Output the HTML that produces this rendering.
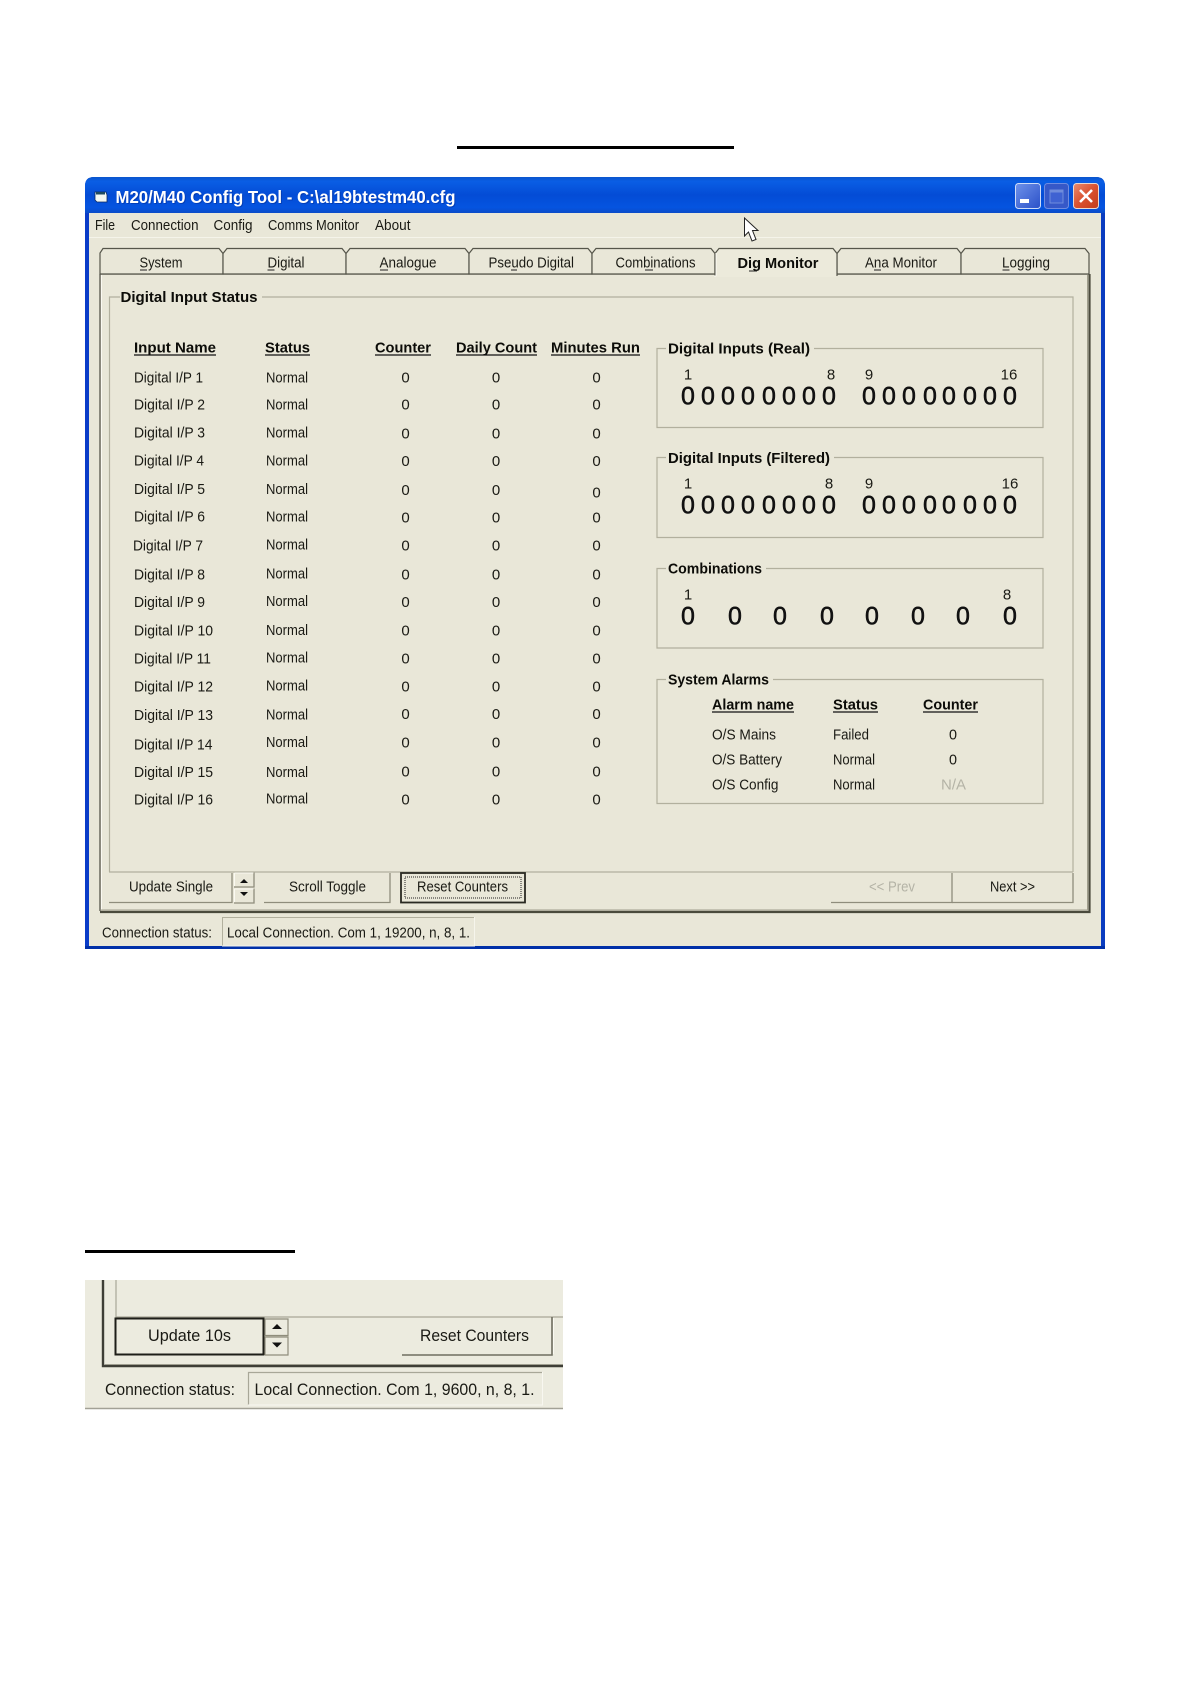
<!DOCTYPE html>
<html><head><meta charset="utf-8"><title>M20/M40 Config Tool</title>
<style>
html,body{margin:0;padding:0;background:#fff;width:1191px;height:1684px;overflow:hidden}
svg{display:block;filter:blur(.35px)}
text{font-family:"Liberation Sans",sans-serif;font-size:15px;fill:#1a1a14;transform:translateY(-.8px)}
.b{font-weight:bold;fill:#0c0c08}
.z{font-size:25px;fill:#111;stroke:#111;stroke-width:.55px;transform:translateY(0)}
.w{fill:#fff;font-weight:bold;font-size:17.500px;transform:none}
.n{transform:none}
.g{fill:#b4b3a6}
.l{font-size:17px}
</style></head><body>
<svg width="1191" height="1684" viewBox="0 0 1191 1684" xmlns="http://www.w3.org/2000/svg">
<defs>
<linearGradient id="tb" x1="0" y1="0" x2="0" y2="1"><stop offset="0" stop-color="#0a55cc"/><stop offset=".12" stop-color="#0a5ee4"/><stop offset=".5" stop-color="#044cd6"/><stop offset=".85" stop-color="#0554e0"/><stop offset="1" stop-color="#0a4cc8"/></linearGradient>
<linearGradient id="bm" x1="0" y1="0" x2="1" y2="1"><stop offset="0" stop-color="#6f92ea"/><stop offset="1" stop-color="#2a50c8"/></linearGradient>
<linearGradient id="bx" x1="0" y1="0" x2="1" y2="1"><stop offset="0" stop-color="#e88c70"/><stop offset=".5" stop-color="#d9512f"/><stop offset="1" stop-color="#c23c1c"/></linearGradient>
</defs>
<rect width="1191" height="1684" fill="#fff"/>
<rect x="457" y="146" width="277" height="3" fill="#000"/>
<rect x="85" y="1250" width="210" height="3" fill="#000"/>

<!-- window -->
<path d="M85 949V186q0-9 9-9H1096q9 0 9 9V949Z" fill="#0a3cc8"/>
<path d="M85 186q0-9 9-9H1096q9 0 9 9V213H85Z" fill="url(#tb)"/>
<rect x="89" y="213" width="1012" height="733" fill="#e9e7d8"/>
<rect x="85" y="946" width="1020" height="3" fill="#0030a8"/>
<rect x="1101" y="213" width="4" height="733" fill="#0a3cc0"/>
<rect x="89" y="237" width="1012" height="1" fill="#f5f4ea"/>

<!-- title icon -->
<path d="M95 192h11l1 3v7H97l-2-2Z" fill="#f4f8f2" stroke="#0c2a60" stroke-width=".8"/>
<rect x="96" y="192" width="9" height="2.500" fill="#1e4a60"/>
<text class="w" x="116.500" y="204" textLength="340" lengthAdjust="spacingAndGlyphs" style="fill:#001a70;fill-opacity:.35">M20/M40 Config Tool - C:\al19btestm40.cfg</text>
<text class="w" x="115.500" y="203" textLength="340" lengthAdjust="spacingAndGlyphs">M20/M40 Config Tool - C:\al19btestm40.cfg</text>

<!-- caption buttons -->
<rect x="1015.500" y="183.500" width="25" height="25" rx="3" fill="url(#bm)" stroke="#cfdcf8"/>
<rect x="1020" y="199" width="9" height="4" fill="#fff"/>
<rect x="1044.500" y="183.500" width="24" height="25" rx="3" fill="#3658c8" stroke="#6f8be0"/>
<rect x="1050" y="190" width="13" height="13" fill="#3f62d2" stroke="#6f8cdc"/>
<rect x="1050" y="190" width="13" height="2.500" fill="#6f8cdc"/>
<rect x="1073.500" y="183.500" width="25" height="25" rx="3" fill="url(#bx)" stroke="#e8d8d0"/>
<path d="M1080 190l12 12M1092 190l-12 12" stroke="#fff" stroke-width="2.600" fill="none"/>

<!-- menu -->
<text class="n" x="95" y="230" textLength="20" lengthAdjust="spacingAndGlyphs">File</text>
<text class="n" x="131" y="230" textLength="67.500" lengthAdjust="spacingAndGlyphs">Connection</text>
<text class="n" x="213.500" y="230" textLength="39" lengthAdjust="spacingAndGlyphs">Config</text>
<text class="n" x="268" y="230" textLength="91" lengthAdjust="spacingAndGlyphs">Comms Monitor</text>
<text class="n" x="375" y="230" textLength="35.500" lengthAdjust="spacingAndGlyphs">About</text>

<!-- cursor -->
<path d="M744.500 218v18l4-4 3.500 9 4-1.500-3.500-9h5.500Z" fill="#fff" stroke="#222" stroke-width="1"/>

<!-- panel -->
<rect x="100" y="274" width="989" height="638" fill="#e9e7d8"/>
<path d="M100 274H1089" stroke="#4a4a40" stroke-width="1.200"/>
<path d="M100 274V911" stroke="#4a4a40" stroke-width="1.200"/>
<path d="M101.500 275V910" stroke="#fbfaf2" stroke-width="1"/>
<path d="M1087.500 275V910H101" stroke="#a09e8c" stroke-width="1" fill="none"/>
<path d="M1089.500 274V912H100" stroke="#4a4a3c" stroke-width="2.200" fill="none"/>

<!-- tabs -->
<g fill="#e9e7d8" stroke="#55554a" stroke-width="1.200">
<path d="M100 274V253l3-4.500H219l4 5v20.500Z"/>
<path d="M223 274V253.500l4-5H342l4 5v20.500Z"/>
<path d="M346 274V253.500l4-5H465l4 5v20.500Z"/>
<path d="M469 274V253.500l4-5H588l4 5v20.500Z"/>
<path d="M592 274V253.500l4-5H711l4 5v20.500Z"/>
<path d="M837 274V253.500l4-5H957l4 5v20.500Z"/>
<path d="M961 274V253.500l4-5H1085l4 5v20.500Z"/>
<path d="M715 276V253.500l4-5H833l4 5v22.500" fill="#eceadb"/>
</g>
<rect x="716" y="271" width="120" height="6" fill="#eceadb"/>
<path d="M716 276V253M716 276h-2" stroke="#fdfcf4" stroke-width="1"/>
<text x="139.500" y="268.500" textLength="43" lengthAdjust="spacingAndGlyphs">System</text>
<path d="M140 270h7" stroke="#222"/>
<text x="267.500" y="268.500" textLength="37" lengthAdjust="spacingAndGlyphs">Digital</text>
<path d="M267.500 270h7" stroke="#222"/>
<text x="379.500" y="268.500" textLength="57" lengthAdjust="spacingAndGlyphs">Analogue</text>
<path d="M380 270h8" stroke="#222"/>
<text x="488.500" y="268.500" textLength="85.500" lengthAdjust="spacingAndGlyphs">Pseudo Digital</text>
<path d="M511 270h6" stroke="#222"/>
<text x="615.500" y="268.500" textLength="80" lengthAdjust="spacingAndGlyphs">Combinations</text>
<path d="M645 270h8" stroke="#222"/>
<text class="b" x="737.500" y="269" textLength="81" lengthAdjust="spacingAndGlyphs">Dig Monitor</text>
<path d="M749 271h8" stroke="#222"/>
<text x="865" y="268.500" textLength="72" lengthAdjust="spacingAndGlyphs">Ana Monitor</text>
<path d="M874 270h7" stroke="#222"/>
<text x="1002" y="268.500" textLength="48" lengthAdjust="spacingAndGlyphs">Logging</text>
<path d="M1002.500 270h7" stroke="#222"/>

<!-- main group -->
<path d="M120 297H109.500V872M262 297H1073V872" fill="none" stroke="#b2b09e" stroke-width="1.200"/>
<path d="M109 872H1073" stroke="#b2b09e" stroke-width="1.200"/>
<text class="b" x="120.500" y="303" textLength="137" lengthAdjust="spacingAndGlyphs">Digital Input Status</text>

<!-- headers -->
<text class="b" x="134" y="353.500" textLength="82" lengthAdjust="spacingAndGlyphs">Input Name</text>
<text class="b" x="265" y="353.500" textLength="45" lengthAdjust="spacingAndGlyphs">Status</text>
<text class="b" x="375" y="353.500" textLength="56" lengthAdjust="spacingAndGlyphs">Counter</text>
<text class="b" x="456" y="353.500" textLength="81" lengthAdjust="spacingAndGlyphs">Daily Count</text>
<text class="b" x="551" y="353.500" textLength="89" lengthAdjust="spacingAndGlyphs">Minutes Run</text>
<g stroke="#111" stroke-width="1.200"><path d="M134 355h82M265 355h45M375 355h56M456 355h81M551 355h89"/></g>

<!-- rows names -->
<g>
<text x="134" y="383.500" textLength="69" lengthAdjust="spacingAndGlyphs">Digital I/P 1</text>
<text x="134" y="410.500" textLength="71" lengthAdjust="spacingAndGlyphs">Digital I/P 2</text>
<text x="134" y="438.500" textLength="71" lengthAdjust="spacingAndGlyphs">Digital I/P 3</text>
<text x="134" y="466.500" textLength="70" lengthAdjust="spacingAndGlyphs">Digital I/P 4</text>
<text x="134" y="495" textLength="71" lengthAdjust="spacingAndGlyphs">Digital I/P 5</text>
<text x="134" y="522.500" textLength="71" lengthAdjust="spacingAndGlyphs">Digital I/P 6</text>
<text x="133" y="551.500" textLength="70" lengthAdjust="spacingAndGlyphs">Digital I/P 7</text>
<text x="134" y="580.500" textLength="71" lengthAdjust="spacingAndGlyphs">Digital I/P 8</text>
<text x="134" y="608" textLength="71" lengthAdjust="spacingAndGlyphs">Digital I/P 9</text>
<text x="134" y="636.500" textLength="79" lengthAdjust="spacingAndGlyphs">Digital I/P 10</text>
<text x="134" y="664.500" textLength="77" lengthAdjust="spacingAndGlyphs">Digital I/P 11</text>
<text x="134" y="692.500" textLength="79" lengthAdjust="spacingAndGlyphs">Digital I/P 12</text>
<text x="134" y="721" textLength="79" lengthAdjust="spacingAndGlyphs">Digital I/P 13</text>
<text x="134" y="750.500" textLength="78.500" lengthAdjust="spacingAndGlyphs">Digital I/P 14</text>
<text x="134" y="778" textLength="79" lengthAdjust="spacingAndGlyphs">Digital I/P 15</text>
<text x="134" y="805.500" textLength="79" lengthAdjust="spacingAndGlyphs">Digital I/P 16</text>
</g>
<!-- status -->
<text x="266" y="383.500" textLength="42" lengthAdjust="spacingAndGlyphs">Normal</text>
<text x="266" y="410.500" textLength="42" lengthAdjust="spacingAndGlyphs">Normal</text>
<text x="266" y="438.500" textLength="42" lengthAdjust="spacingAndGlyphs">Normal</text>
<text x="266" y="466.500" textLength="42" lengthAdjust="spacingAndGlyphs">Normal</text>
<text x="266" y="495" textLength="42" lengthAdjust="spacingAndGlyphs">Normal</text>
<text x="266" y="522.500" textLength="42" lengthAdjust="spacingAndGlyphs">Normal</text>
<text x="266" y="550.500" textLength="42" lengthAdjust="spacingAndGlyphs">Normal</text>
<text x="266" y="579.500" textLength="42" lengthAdjust="spacingAndGlyphs">Normal</text>
<text x="266" y="607" textLength="42" lengthAdjust="spacingAndGlyphs">Normal</text>
<text x="266" y="636" textLength="42" lengthAdjust="spacingAndGlyphs">Normal</text>
<text x="266" y="663.500" textLength="42" lengthAdjust="spacingAndGlyphs">Normal</text>
<text x="266" y="691.500" textLength="42" lengthAdjust="spacingAndGlyphs">Normal</text>
<text x="266" y="720.500" textLength="42" lengthAdjust="spacingAndGlyphs">Normal</text>
<text x="266" y="748" textLength="42" lengthAdjust="spacingAndGlyphs">Normal</text>
<text x="266" y="778" textLength="42" lengthAdjust="spacingAndGlyphs">Normal</text>
<text x="266" y="804.500" textLength="42" lengthAdjust="spacingAndGlyphs">Normal</text>
<!-- counters -->
<g text-anchor="middle">
<text x="405.500" y="383.500">0</text><text x="405.500" y="410.500">0</text><text x="405.500" y="439.500">0</text><text x="405.500" y="467">0</text><text x="405.500" y="496">0</text><text x="405.500" y="523.500">0</text><text x="405.500" y="551.500">0</text><text x="405.500" y="580.500">0</text><text x="405.500" y="608">0</text><text x="405.500" y="636.500">0</text><text x="405.500" y="664.500">0</text><text x="405.500" y="692.500">0</text><text x="405.500" y="720">0</text><text x="405.500" y="748.500">0</text><text x="405.500" y="777.500">0</text><text x="405.500" y="805.500">0</text>
<text x="496" y="383.500">0</text><text x="496" y="410.500">0</text><text x="496" y="439.500">0</text><text x="496" y="467">0</text><text x="496" y="496">0</text><text x="496" y="523.500">0</text><text x="496" y="551.500">0</text><text x="496" y="580.500">0</text><text x="496" y="608">0</text><text x="496" y="636.500">0</text><text x="496" y="664.500">0</text><text x="496" y="692.500">0</text><text x="496" y="720">0</text><text x="496" y="748.500">0</text><text x="496" y="777.500">0</text><text x="496" y="805.500">0</text>
<text x="596.500" y="383.500">0</text><text x="596.500" y="410.500">0</text><text x="596.500" y="439.500">0</text><text x="596.500" y="467">0</text><text x="596.500" y="498.500">0</text><text x="596.500" y="523.500">0</text><text x="596.500" y="551.500">0</text><text x="596.500" y="580.500">0</text><text x="596.500" y="608">0</text><text x="596.500" y="636.500">0</text><text x="596.500" y="664.500">0</text><text x="596.500" y="692.500">0</text><text x="596.500" y="720">0</text><text x="596.500" y="748.500">0</text><text x="596.500" y="777.500">0</text><text x="596.500" y="805.500">0</text>
</g>

<!-- right groups -->
<g fill="none" stroke="#b2b09e" stroke-width="1.200">
<path d="M666 348.500H657V427.500H1043V348.500H814"/>
<path d="M666 457.500H657V537.500H1043V457.500H834"/>
<path d="M666 568.500H657V648H1043V568.500H766"/>
<path d="M666 679.500H657V803.500H1043V679.500H773"/>
</g>
<text class="b" x="668" y="354.500" textLength="142" lengthAdjust="spacingAndGlyphs">Digital Inputs (Real)</text>
<text class="b" x="668" y="464" textLength="162" lengthAdjust="spacingAndGlyphs">Digital Inputs (Filtered)</text>
<text class="b" x="668" y="574.500" textLength="94" lengthAdjust="spacingAndGlyphs">Combinations</text>
<text class="b" x="668" y="685.500" textLength="101" lengthAdjust="spacingAndGlyphs">System Alarms</text>

<g text-anchor="middle">
<text class="n" x="688" y="379.500">1</text><text class="n" x="831" y="379.500">8</text><text class="n" x="869" y="379.500">9</text><text class="n" x="1009" y="379.500">16</text>
<text class="n" x="688" y="488.500">1</text><text class="n" x="829" y="488.500">8</text><text class="n" x="869" y="488.500">9</text><text class="n" x="1010" y="488.500">16</text>
<text class="n" x="688" y="599.500">1</text><text class="n" x="1007" y="599.500">8</text>
</g>
<g text-anchor="middle">
<text class="z" x="688" y="404.500">0</text><text class="z" x="708" y="404.500">0</text><text class="z" x="728" y="404.500">0</text><text class="z" x="748" y="404.500">0</text><text class="z" x="769" y="404.500">0</text><text class="z" x="789" y="404.500">0</text><text class="z" x="809" y="404.500">0</text><text class="z" x="829" y="404.500">0</text>
<text class="z" x="869" y="404.500">0</text><text class="z" x="889" y="404.500">0</text><text class="z" x="909" y="404.500">0</text><text class="z" x="930" y="404.500">0</text><text class="z" x="949" y="404.500">0</text><text class="z" x="970" y="404.500">0</text><text class="z" x="990" y="404.500">0</text><text class="z" x="1010" y="404.500">0</text>
<text class="z" x="688" y="513.500">0</text><text class="z" x="708" y="513.500">0</text><text class="z" x="728" y="513.500">0</text><text class="z" x="748" y="513.500">0</text><text class="z" x="769" y="513.500">0</text><text class="z" x="789" y="513.500">0</text><text class="z" x="809" y="513.500">0</text><text class="z" x="829" y="513.500">0</text>
<text class="z" x="869" y="513.500">0</text><text class="z" x="889" y="513.500">0</text><text class="z" x="909" y="513.500">0</text><text class="z" x="930" y="513.500">0</text><text class="z" x="949" y="513.500">0</text><text class="z" x="970" y="513.500">0</text><text class="z" x="990" y="513.500">0</text><text class="z" x="1010" y="513.500">0</text>
<text class="z" x="688" y="624.500">0</text><text class="z" x="735" y="624.500">0</text><text class="z" x="780" y="624.500">0</text><text class="z" x="827" y="624.500">0</text><text class="z" x="872" y="624.500">0</text><text class="z" x="918" y="624.500">0</text><text class="z" x="963" y="624.500">0</text><text class="z" x="1010" y="624.500">0</text>
</g>

<!-- alarms -->
<text class="b" x="712" y="710.500" textLength="82" lengthAdjust="spacingAndGlyphs">Alarm name</text>
<text class="b" x="833" y="710.500" textLength="45" lengthAdjust="spacingAndGlyphs">Status</text>
<text class="b" x="923" y="710.500" textLength="55" lengthAdjust="spacingAndGlyphs">Counter</text>
<path d="M712 712h82M833 712h45M923 712h55" stroke="#111" stroke-width="1.200"/>
<text x="712" y="740.500" textLength="64" lengthAdjust="spacingAndGlyphs">O/S Mains</text>
<text x="833" y="740.500" textLength="36" lengthAdjust="spacingAndGlyphs">Failed</text>
<text x="949" y="740.500" textLength="8" lengthAdjust="spacingAndGlyphs">0</text>
<text x="712" y="765.500" textLength="70" lengthAdjust="spacingAndGlyphs">O/S Battery</text>
<text x="833" y="765.500" textLength="42" lengthAdjust="spacingAndGlyphs">Normal</text>
<text x="949" y="765.500" textLength="8" lengthAdjust="spacingAndGlyphs">0</text>
<text x="712" y="790.500" textLength="66.500" lengthAdjust="spacingAndGlyphs">O/S Config</text>
<text x="833" y="790.500" textLength="42" lengthAdjust="spacingAndGlyphs">Normal</text>
<text class="g" x="941" y="790.500" textLength="25" lengthAdjust="spacingAndGlyphs">N/A</text>

<!-- buttons -->
<g fill="#e9e7d8">
<path d="M109 902.500V873H232V902.500Z" />
<path d="M264 902.500V873H390V902.500Z" />
<path d="M831 902.500V873H952V902.500Z" />
<path d="M952 902.500V873H1073V902.500Z" />
</g>
<g fill="none" stroke-width="1.300">
<path d="M109 902.500H232V873" stroke="#8f8d7c"/>
<path d="M264 902.500H390V873" stroke="#8f8d7c"/>
<path d="M831 902.500H952V873" stroke="#8f8d7c"/>
<path d="M952 902.500H1073V873" stroke="#8f8d7c"/>
<path d="M254 872.500V887H234M254 888.500V903H234" stroke="#8f8d7c"/>
<path d="M234.500 873h19M234.500 873v13M234.500 889h19M234.500 889v13" stroke="#fbfaf2" stroke-width="1"/>
</g>
<path d="M240 883l4-4 4 4ZM240 892l4 4 4-4Z" fill="#111"/>
<rect x="401" y="873" width="124" height="29.500" fill="#e9e7d8" stroke="#2a2a22" stroke-width="1.800"/>
<rect x="405" y="877" width="116" height="21" fill="none" stroke="#222" stroke-width="1" stroke-dasharray="1 1"/>
<text x="129" y="892.500" textLength="84" lengthAdjust="spacingAndGlyphs">Update Single</text>
<text x="289" y="892.500" textLength="77" lengthAdjust="spacingAndGlyphs">Scroll Toggle</text>
<text x="417" y="892.500" textLength="91" lengthAdjust="spacingAndGlyphs">Reset Counters</text>
<text class="g" x="869" y="892.500" textLength="46" lengthAdjust="spacingAndGlyphs">&lt;&lt; Prev</text>
<text x="990" y="892.500" textLength="45" lengthAdjust="spacingAndGlyphs">Next &gt;&gt;</text>

<!-- status bar -->
<text x="102" y="938.500" textLength="110" lengthAdjust="spacingAndGlyphs">Connection status:</text>
<path d="M222.500 946V917.500H474" fill="none" stroke="#b2b09e"/>
<path d="M474.500 917V946H222" fill="none" stroke="#f6f5ec"/>
<text x="227" y="938.500" textLength="243" lengthAdjust="spacingAndGlyphs">Local Connection. Com 1, 19200, n, 8, 1.</text>

<!-- second screenshot -->
<rect x="85" y="1280" width="478" height="129" fill="#ecebdf"/>
<path d="M85 1408.500H563" stroke="#a2a196" stroke-width="1.500"/>
<path d="M103 1280V1366H563" fill="none" stroke="#3e3e36" stroke-width="2.400"/>
<path d="M105 1364.500H563" stroke="#9f9e90"/>
<path d="M116 1280V1317H563" fill="none" stroke="#a8a798" stroke-width="1.200"/>
<rect x="115.500" y="1318.500" width="148" height="36" fill="#ecebdf" stroke="#1e1e18" stroke-width="2"/>
<path d="M265 1335.500V1319H288V1335.500H265M265 1355V1337H288V1355H265" fill="none" stroke="#8f8d7c" stroke-width="1.200"/>
<path d="M272 1329l5-5 5 5ZM272 1342.500l5 5 5-5Z" fill="#111"/>
<path d="M402 1355H552V1317" fill="none" stroke="#6f6e60" stroke-width="1.600"/>
<path d="M553.500 1318v36" stroke="#fbfaf2"/>
<text class="l" x="148" y="1342" textLength="83" lengthAdjust="spacingAndGlyphs">Update 10s</text>
<text class="l" x="420" y="1342" textLength="109" lengthAdjust="spacingAndGlyphs">Reset Counters</text>
<text class="l" x="105" y="1396" textLength="130" lengthAdjust="spacingAndGlyphs">Connection status:</text>
<path d="M248.500 1405V1372.500H542" fill="none" stroke="#a8a798" stroke-width="1.200"/>
<path d="M542.500 1372V1405H248" fill="none" stroke="#f8f7f0"/>
<text class="l" x="254.500" y="1396" textLength="280" lengthAdjust="spacingAndGlyphs">Local Connection. Com 1, 9600, n, 8, 1.</text>
</svg>
</body></html>
